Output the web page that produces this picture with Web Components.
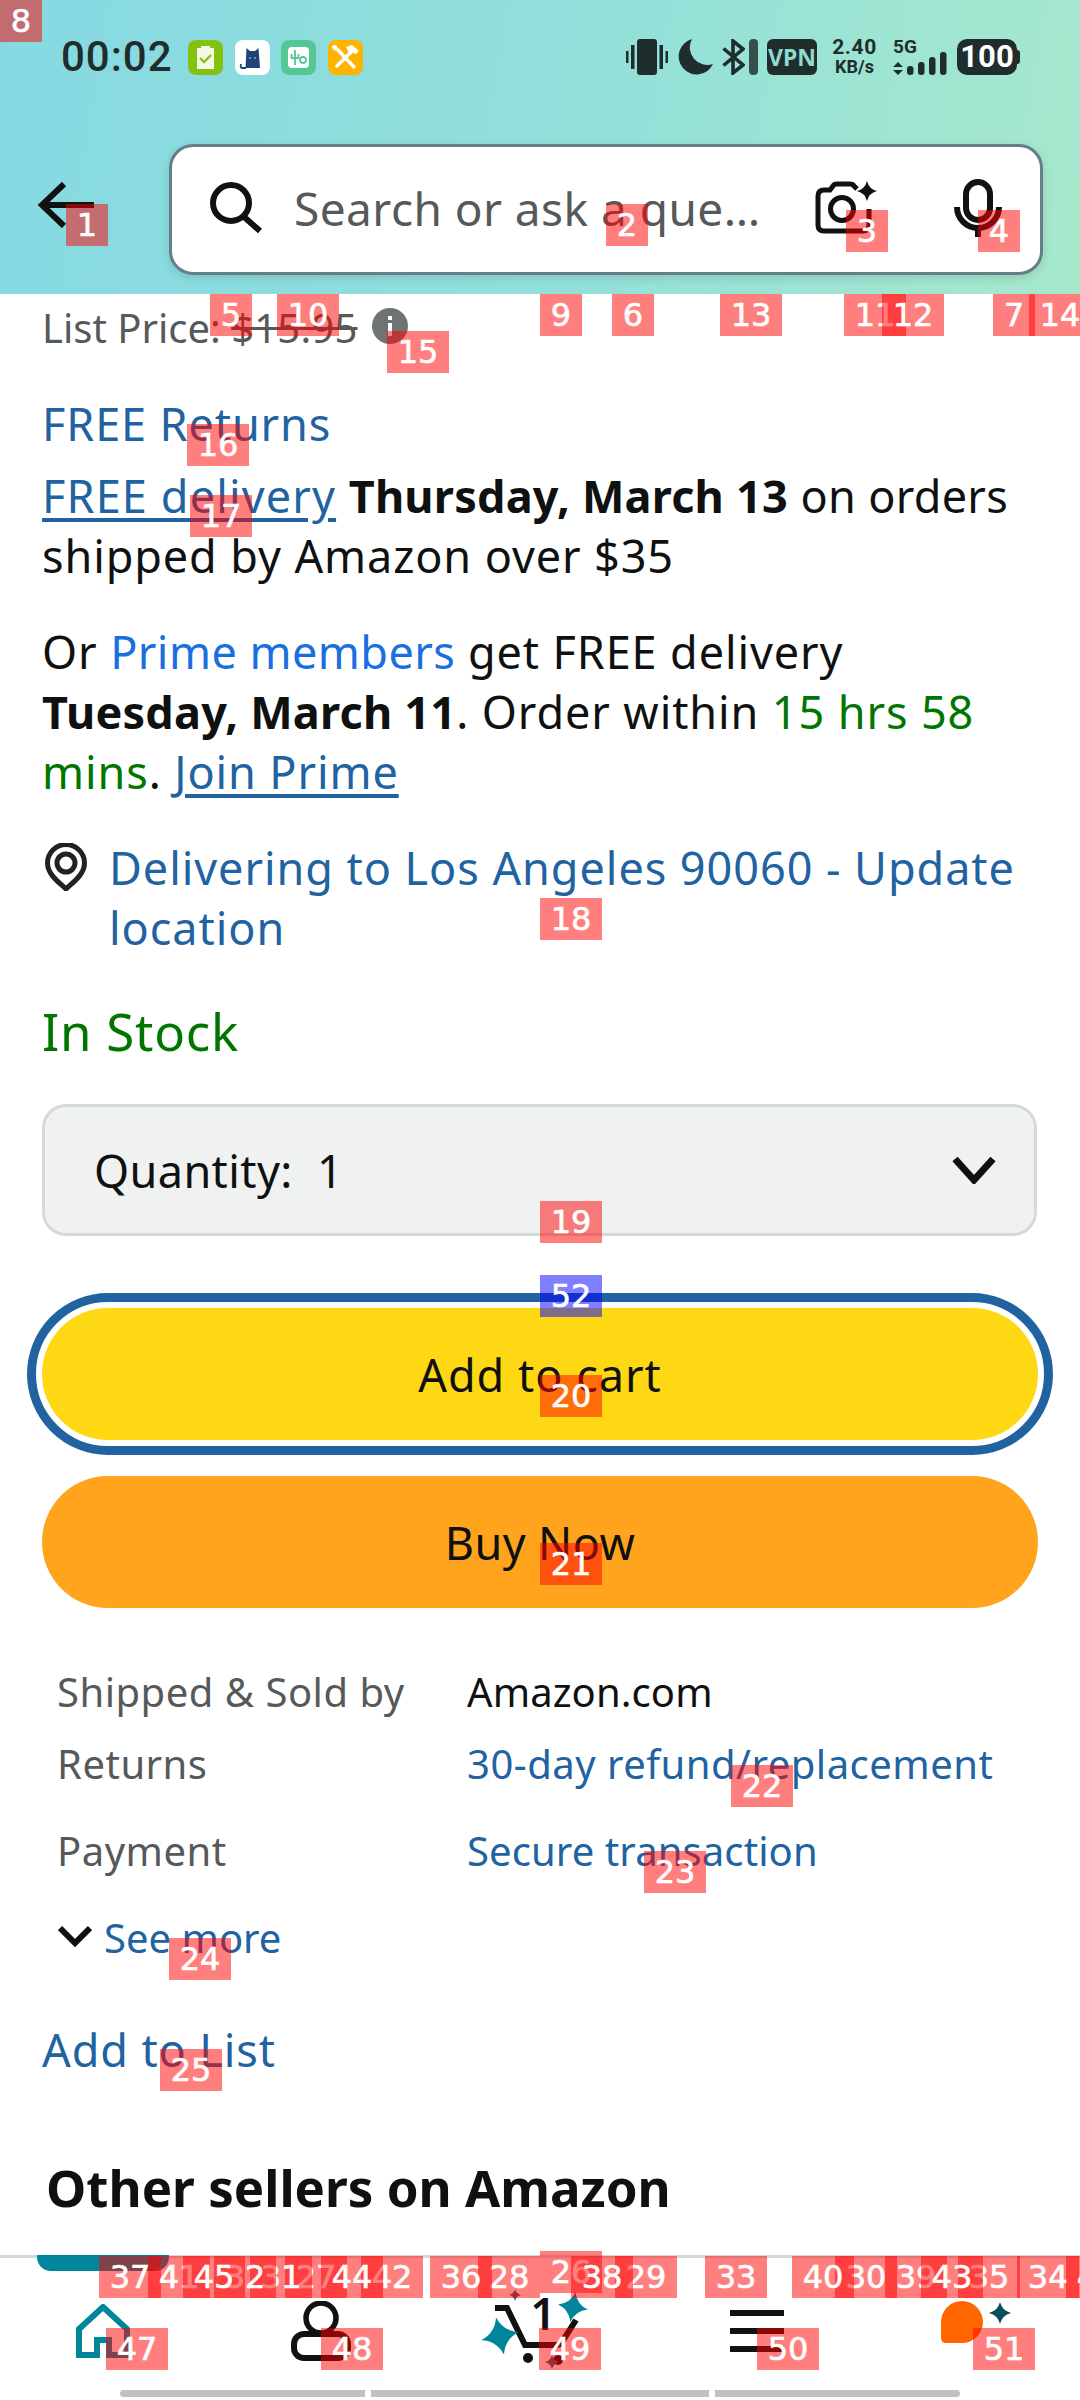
<!DOCTYPE html>
<html>
<head>
<meta charset="utf-8">
<title>Amazon product</title>
<style>
  html, body { margin: 0; padding: 0; background: #fff; }
  body { width: 1080px; height: 2400px; overflow: hidden; position: relative; font-family: "Noto Sans", "Liberation Sans", sans-serif; color: #0f1111; display: flex; flex-direction: column; }
  b { letter-spacing: .22px; }
</style>
</head>
<body>
<top-header></top-header>
<page-content>
  <list-price style="--gap:6px">$15.95</list-price>
  <text-block style="--gap:38px"><blue-link>FREE Returns</blue-link></text-block>
  <text-block style="--gap:12px"><blue-link underline style="letter-spacing:1.15px">FREE delivery</blue-link> <b>Thursday, March 13</b> <span style="letter-spacing:.3px">on orders</span> shipped by Amazon over $35</text-block>
  <text-block style="--gap:36px">Or <blue-link bright style="letter-spacing:.45px">Prime members</blue-link> get FREE delivery <b>Tuesday, March 11</b>. Order within <green-text>15 hrs 58 mins</green-text>. <blue-link underline>Join Prime</blue-link></text-block>
  <location-line style="--gap:36px">Delivering to Los Angeles 90060 - Update location</location-line>
  <stock-line style="--gap:39px">In Stock</stock-line>
  <quantity-select style="--gap:39px">Quantity:&nbsp; 1</quantity-select>
  <buy-button focused style="--gap:57px">Add to cart</buy-button>
  <buy-button orange style="--gap:21px">Buy Now</buy-button>
  <info-row style="--gap:56px" label="Shipped &amp; Sold by">Amazon.com</info-row>
  <info-row style="--gap:16px" label="Returns"><blue-link style="letter-spacing:.5px">30-day refund/replacement</blue-link></info-row>
  <info-row style="--gap:31px" label="Payment"><blue-link>Secure transaction</blue-link></info-row>
  <see-more style="--gap:31px">See more</see-more>
  <text-block style="--gap:54px"><blue-link>Add to List</blue-link></text-block>
  <section-title style="--gap:73px">Other sellers on Amazon</section-title>
</page-content>
<bottom-nav></bottom-nav>
<mark-layer></mark-layer>

<script>
// four point sparkle, used in the camera icon and the nav bar
function star(cx, cy, r, k) {
  k = k || 0.18;
  const c = r * k;
  return `M${cx} ${cy - r}Q${cx + c} ${cy - c} ${cx + r} ${cy}Q${cx + c} ${cy + c} ${cx} ${cy + r}Q${cx - c} ${cy + c} ${cx - r} ${cy}Q${cx - c} ${cy - c} ${cx} ${cy - r}Z`;
}

class Base extends HTMLElement {
  constructor() {
    super();
    this.attachShadow({ mode: 'open' });
    this.shadowRoot.innerHTML = this.render();
  }
  render() { return ''; }
}

class TopHeader extends Base {
  render() {
    return `<style>
      :host { display: block; height: 294px; flex: none; background: linear-gradient(100deg, #85d9e2 0%, #93e0da 55%, #a7e8cc 100%); }
      .status { display: flex; align-items: center; height: 36px; padding: 39px 60px 0 61px; color: #1f2d2d; }
      .time { font: 500 42px/36px Roboto, sans-serif; width: 127px; flex: none; letter-spacing: 1px; }
      .apps { display: flex; gap: 11.5px; }
      .apps svg { width: 35px; height: 35px; display: block; }
      .right { margin-left: auto; display: flex; align-items: center; height: 36px; }
      .right svg { display: block; flex: none; }
      .vpn { background: #1f2d2d; color: #8fdccf; width: 50px; height: 36px; border-radius: 6px; font: 700 23px/36px "Noto Sans", sans-serif; text-align: center; margin: 0 14px 0 9px; }
      .speed { width: 47px; text-align: center; font-family: Roboto, sans-serif; font-weight: 700; margin-right: 15px; white-space: nowrap; }
      .speed div:first-child { font-size: 21px; line-height: 19px; letter-spacing: .6px; }
      .speed div:last-child { font-size: 18px; line-height: 19px; }
      .net { position: relative; width: 54px; height: 36px; margin-right: 10px; }
      .g5 { position: absolute; left: 0; top: 0; font: 700 19px/16px Roboto, sans-serif; }
      .battery { position: relative; width: 60px; height: 36px; background: #1f2d2d; border-radius: 10px; color: #fff; font: 700 31px/36px Roboto, sans-serif; text-align: center; margin-right: 3px; }
      .battery::after { content: ""; position: absolute; left: 60px; top: 11px; width: 3px; height: 14px; background: #1f2d2d; border-radius: 0 3px 3px 0; }
      .search-row { display: flex; align-items: center; margin-top: 69px; padding-left: 37px; }
      .back { width: 58px; height: 46px; margin-top: -10px; flex: none; }
      .box { width: 868px; height: 125px; margin-left: 74px; flex: none; display: flex; align-items: center; background: #fff; border: 3px solid #667f86; border-radius: 24px; box-shadow: 0 3px 10px rgba(0,0,0,.12); }
      .mag { margin: 0 0 0 38px; width: 52px; height: 51px; flex: none; margin-top: -4px; }
      .ph { font-size: 46px; color: #565959; margin-left: 32px; width: 521px; flex: none; white-space: nowrap; letter-spacing: .45px; margin-top: -3px; }
      .cam { width: 62px; height: 53px; flex: none; margin-top: -4px; }
      .mic { width: 48px; height: 58px; flex: none; margin-left: 77px; margin-top: -4px; }
    </style>
    <div class="status">
      <div class="time">00:02</div>
      <div class="apps">
        <svg viewBox="0 0 35 35"><rect width="35" height="35" rx="8" fill="#85c210"/><rect x="9" y="8" width="17" height="21" fill="#f3f9e6"/><rect x="13" y="6" width="9" height="4" fill="#f3f9e6"/><path d="M12 18l4 4 7-7" fill="none" stroke="#85c210" stroke-width="2.4"/></svg>
        <svg viewBox="0 0 35 35"><rect width="35" height="35" rx="8" fill="#fff"/><path d="M10.500 28L11.500 8L15 11H20L23.500 8L25 28Z" fill="#1f4378"/><path d="M11 28H7Q5 28 6 24" fill="none" stroke="#1f4378" stroke-width="1.800"/><circle cx="15" cy="18" r="1" fill="#8aa"/><circle cx="20" cy="18" r="1" fill="#8aa"/></svg>
        <svg viewBox="0 0 35 35"><rect width="35" height="35" rx="8" fill="#55c795"/><rect x="7" y="7" width="21" height="21" rx="4" fill="#fff"/><path d="M14 10v15M10.500 14v4h7v-4" fill="none" stroke="#55c795" stroke-width="1.800"/><circle cx="22" cy="20" r="3" fill="none" stroke="#55c795" stroke-width="1.800"/></svg>
        <svg viewBox="0 0 35 35"><rect width="35" height="35" rx="8" fill="#ffb200"/><path d="M10 10L26 27M24 11L9 26" stroke="#fff" stroke-width="3.500" stroke-linecap="round"/><path d="M18 7l6-2 7 6-3 3-4-2-3 1z" fill="#fff"/><path d="M4 8l3 3 3-3-2-3q-5 0-4 3z" fill="#fff"/></svg>
      </div>
      <div class="right">
        <svg width="42" height="36" viewBox="0 0 42 36" fill="#1f2d2d"><rect x="0" y="12" width="2.500" height="12"/><rect x="5" y="6" width="3.500" height="24"/><rect x="11" y="0" width="20" height="36" rx="3"/><rect x="33.500" y="6" width="3.500" height="24"/><rect x="39.500" y="12" width="2.500" height="12"/></svg>
        <svg width="36" height="36" viewBox="0 0 36 36" style="margin-left:9px"><path d="M15 0A18 18 0 1 0 36 25A17.500 17.500 0 0 1 15 0Z" fill="#1f2d2d"/></svg>
        <svg width="23" height="36" viewBox="0 0 23 36" style="margin-left:9px"><path d="M1.500 9.500L21 26L11 34V2L21 10L1.500 26.500" fill="none" stroke="#1f2d2d" stroke-width="3.600"/></svg>
        <svg width="9" height="36" viewBox="0 0 9 36" style="margin-left:4px"><rect width="9" height="36" rx="4" fill="#34504b"/></svg>
        <div class="vpn">VPN</div>
        <div class="speed"><div>2.40</div><div>KB/s</div></div>
        <div class="net">
          <div class="g5">5G</div>
          <svg width="54" height="36" viewBox="0 0 54 36" fill="#1f2d2d"><path d="M5 23l5 5H0zM5 36l-5-5h10z"/><rect x="14" y="27" width="6.500" height="9" rx="3"/><rect x="25" y="23" width="6.500" height="13" rx="3"/><rect x="36" y="18" width="6.500" height="18" rx="3"/><rect x="47" y="13" width="6.500" height="23" rx="3"/></svg>
        </div>
        <div class="battery">100</div>
      </div>
    </div>
    <div class="search-row">
      <svg class="back" viewBox="0 0 58 46"><path d="M27 2L5 23L27 44M5 23H57" fill="none" stroke="#111" stroke-width="6"/></svg>
      <div class="box">
        <svg class="mag" viewBox="0 0 52 51"><circle cx="21" cy="21" r="18" fill="none" stroke="#111" stroke-width="6"/><path d="M33 34L50 49" stroke="#111" stroke-width="6"/></svg>
        <div class="ph">Search or ask a que…</div>
        <svg class="cam" viewBox="0 0 62 53"><path d="M42 8L39 5Q38 3 35 3H22Q19 3 18 5L15 9H9Q3 9 3 15V44Q3 50 9 50H48Q54 50 54 44V28" fill="none" stroke="#111" stroke-width="5"/><circle cx="27" cy="28" r="11.500" fill="none" stroke="#111" stroke-width="5"/><path d="${star(52, 10, 10, .2)}" fill="#111"/></svg>
        <svg class="mic" viewBox="0 0 48 58"><rect x="12" y="3" width="24" height="38" rx="12" fill="none" stroke="#111" stroke-width="6"/><path d="M3 28A21 21 0 0 0 45 28M24 49V58" fill="none" stroke="#111" stroke-width="6"/></svg>
      </div>
    </div>`;
  }
}

class PageContent extends Base {
  render() {
    return `<style>:host { display: block; flex: 1; min-height: 0; overflow: hidden; }</style><slot></slot>`;
  }
}

class ListPrice extends Base {
  render() {
    return `<style>
      :host { display: flex; align-items: center; margin-top: var(--gap, 0); padding: 0 42px; font-size: 40px; line-height: 56px; color: #565959; white-space: pre; }
      s { text-decoration-thickness: 3px; letter-spacing: .2px; }
      svg { width: 36px; height: 36px; margin-left: 14px; margin-top: -4px; }
    </style><span>List Price: </span><s><slot></slot></s>
    <svg viewBox="0 0 36 36"><circle cx="18" cy="18" r="18" fill="#6f7374"/><rect x="16" y="8" width="4" height="4" fill="#fff"/><rect x="16" y="15" width="4" height="13" fill="#fff"/></svg>`;
  }
}

class TextBlock extends Base {
  render() {
    return `<style>:host { display: block; margin-top: var(--gap, 0); padding: 0 42px; font-size: 45px; line-height: 60px; letter-spacing: .9px; }</style><slot></slot>`;
  }
}

class BlueLink extends Base {
  render() {
    return `<style>
      :host { color: #2162a1; }
      :host([bright]) { color: #1a6fe0; }
      :host([underline]) { text-decoration: underline; text-decoration-thickness: 4px; text-underline-offset: 5px; }
    </style><slot></slot>`;
  }
}

class GreenText extends Base {
  render() { return `<style>:host { color: #007600; }</style><slot></slot>`; }
}

class LocationLine extends Base {
  render() {
    return `<style>
      :host { display: flex; margin-top: var(--gap, 0); padding: 0 42px; font-size: 45px; line-height: 60px; letter-spacing: .95px; color: #2162a1; }
      svg { width: 42px; height: 48px; margin: 5px 22px 0 3px; flex: none; }
    </style><svg viewBox="0 0 42 48"><path d="M21 46C15 40 2.500 32 2.500 20A18.500 18.500 0 0 1 39.500 20C39.500 32 27 40 21 46Z" fill="none" stroke="#222" stroke-width="5"/><circle cx="21" cy="20" r="9" fill="none" stroke="#222" stroke-width="5"/></svg><div><slot></slot></div>`;
  }
}

class StockLine extends Base {
  render() {
    return `<style>:host { display: block; margin-top: var(--gap, 0); padding: 0 42px; font-size: 51px; line-height: 68px; letter-spacing: .75px; color: #007600; }</style><slot></slot>`;
  }
}

class QuantitySelect extends Base {
  render() {
    return `<style>
      :host { display: flex; align-items: center; justify-content: space-between; box-sizing: border-box; height: 132px; margin: var(--gap, 0) 43px 0 42px; padding: 0 38px 0 49px; background: #f0f2f2; border: 3px solid #d5d9d9; border-radius: 24px; font-size: 45px; letter-spacing: .4px; }
      svg { width: 44px; height: 28px; }
    </style><span><slot></slot></span><svg viewBox="0 0 44 28"><path d="M3 3L22 24L41 3" fill="none" stroke="#0f1111" stroke-width="7"/></svg>`;
  }
}

class BuyButton extends Base {
  render() {
    return `<style>
      :host { display: block; box-sizing: border-box; margin: var(--gap, 0) 42px 0; letter-spacing: .4px; }
      .btn { height: 132px; border-radius: 66px; background: #ffa41c; display: flex; align-items: center; justify-content: center; font-size: 45px; }
      :host([focused]) { margin-left: 27px; margin-right: 27px; padding: 6px; border: 9px solid #2162a1; border-radius: 81px; letter-spacing: 1px; }
      :host([focused]) .btn { background: #ffd814; }
    </style><div class="btn"><slot></slot></div>`;
  }
}

class InfoRow extends Base {
  render() {
    return `<style>
      :host { display: grid; grid-template-columns: 410px 1fr; margin-top: var(--gap, 0); padding-left: 57px; font-size: 40px; line-height: 56px; letter-spacing: .1px; }
      .label { color: #565959; letter-spacing: .5px; }
    </style><div class="label">${this.getAttribute('label').replace(/&/g, '&amp;')}</div><div><slot></slot></div>`;
  }
}

class SeeMore extends Base {
  render() {
    return `<style>
      :host { display: flex; align-items: center; margin-top: var(--gap, 0); padding-left: 58px; font-size: 40px; line-height: 56px; color: #2162a1; }
      svg { width: 34px; height: 22px; margin-right: 12px; margin-top: -4px; }
    </style><svg viewBox="0 0 34 22"><path d="M2 3L17 18L32 3" fill="none" stroke="#0f1111" stroke-width="6"/></svg><slot></slot>`;
  }
}

class SectionTitle extends Base {
  render() {
    return `<style>:host { display: block; margin-top: var(--gap, 0); padding-left: 46px; font-size: 51px; font-weight: 700; line-height: 68px; white-space: nowrap; }</style><slot></slot>`;
  }
}

class BottomNav extends Base {
  render() {
    return `<style>
      :host { display: block; position: relative; flex: none; height: 145px; box-sizing: border-box; background: #fff; border-top: 3px solid #d0dadc; }
      .tab { position: absolute; left: 37px; top: -3px; width: 132px; height: 16px; background: #00859b; border-radius: 0 0 14px 14px; }
      .cells { display: grid; grid-template-columns: repeat(5, 216px); height: 132px; align-items: center; justify-items: center; }
      svg { display: block; }
      .bars { display: flex; gap: 6px; padding-left: 120px; }
      .bars i { display: block; height: 7px; background: #c0c0c0; }
      .bars i:first-child { width: 245px; border-radius: 4px 0 0 4px; }
      .bars i:nth-child(2) { width: 338px; }
      .bars i:last-child { width: 245px; border-radius: 0 4px 4px 0; }
    </style>
    <div class="tab"></div>
    <div class="cells">
      <svg width="54" height="54" viewBox="0 0 54 54" style="margin:14px 10px 0 0"><path d="M3 51V25L27 3L51 25V51H33V36H21V51Z" fill="none" stroke="#00859b" stroke-width="6"/></svg>
      <svg width="60" height="60" viewBox="0 0 60 60" style="margin:14px 6px 0 0"><circle cx="30" cy="17" r="15" fill="none" stroke="#111" stroke-width="5.500"/><rect x="3" y="33" width="54" height="24" rx="10" fill="#fff" stroke="#111" stroke-width="6"/></svg>
      <svg width="120" height="84" viewBox="0 0 120 84" style="margin:16px 0 0 0">
        <path d="${star(35, 5, 6, .2)}" fill="#3c5c6a"/>
        <path d="M15 18H27L45 55H76Q80 55 82 52L96 30" fill="none" stroke="#111" stroke-width="6"/>
        <circle cx="48" cy="68" r="5" fill="#111"/><circle cx="78" cy="70" r="5" fill="#111"/>
        <path d="${star(20, 46, 19, .22)}" fill="#00859b" transform="rotate(-12 20 46)"/>
        <path d="${star(93, 17, 15, .22)}" fill="#00859b" transform="rotate(10 93 17)"/>
        <path d="${star(72, 72, 7, .2)}" fill="#3c5c6a"/>
        <text x="63" y="40" text-anchor="middle" font-family="Noto Sans, sans-serif" font-size="45" font-weight="600" fill="#111">1</text>
      </svg>
      <svg width="54" height="42" viewBox="0 0 54 42" fill="#111" style="margin:14px 0 0 2px"><rect width="54" height="6"/><rect y="18" width="54" height="6"/><rect y="36" width="54" height="6"/></svg>
      <svg width="70" height="46" viewBox="0 0 70 46" style="margin:-2px 0 0 8px"><path d="M21 1A21 21 0 0 1 21 43H5Q0 43 0 38V22A21 21 0 0 1 21 1Z" fill="#ff6600"/><path d="${star(59, 13, 11, .2)}" fill="#0b4e5e"/></svg>
    </div>
    <div class="bars"><i></i><i></i><i></i></div>`;
  }
}

// the numbered boxes drawn over the screenshot. [number, x, y]
const MARKS = [
  [8, 0, 0], [1, 66, 204], [2, 606, 204], [3, 846, 210], [4, 978, 210],
  [5, 210, 294], [10, 277, 294], [9, 540, 294], [6, 612, 294], [13, 720, 294], [11, 844, 294], [12, 882, 294], [7, 993, 294], [14, 1029, 294],
  [15, 387, 331], [16, 187, 424], [17, 190, 495], [18, 540, 898], [19, 540, 1201], [52, 540, 1275], [20, 540, 1375], [21, 540, 1543],
  [22, 731, 1765], [23, 644, 1851], [24, 169, 1938], [25, 160, 2049],
  [37, 99, 2256], [41, 148, 2256], [45, 183, 2256], [32, 214, 2256], [31, 250, 2256], [27, 285, 2256], [44, 321, 2256], [42, 361, 2256],
  [36, 430, 2256], [28, 478, 2256], [26, 540, 2251], [38, 571, 2256], [29, 615, 2256], [33, 705, 2256],
  [40, 792, 2256], [30, 835, 2256], [39, 885, 2256], [43, 921, 2256], [35, 958, 2256], [34, 1017, 2256], [46, 1066, 2256],
  [47, 106, 2328], [48, 321, 2328], [49, 539, 2328], [50, 757, 2328], [51, 973, 2328]
];

class MarkLayer extends Base {
  render() {
    const items = MARKS.slice().sort((a, b) => a[0] - b[0]).map(m =>
      `<span class="${m[0] === 52 ? 'blue' : ''} ${m[0] < 10 ? 'one' : ''}" style="left:${m[1]}px;top:${m[2]}px">${m[0]}</span>`).join('');
    return `<style>
      :host { position: absolute; inset: 0; overflow: hidden; pointer-events: none; }
      span { position: absolute; width: 62px; height: 42px; background: rgba(255,0,0,.5); color: #fff; font: 32px/42px "DejaVu Sans", sans-serif; text-align: center; -webkit-text-stroke: .6px #fff; }
      .one { width: 42px; }
      .blue { background: rgba(0,0,255,.5); }
    </style>${items}`;
  }
}

customElements.define('top-header', TopHeader);
customElements.define('page-content', PageContent);
customElements.define('list-price', ListPrice);
customElements.define('text-block', TextBlock);
customElements.define('blue-link', BlueLink);
customElements.define('green-text', GreenText);
customElements.define('location-line', LocationLine);
customElements.define('stock-line', StockLine);
customElements.define('quantity-select', QuantitySelect);
customElements.define('buy-button', BuyButton);
customElements.define('info-row', InfoRow);
customElements.define('see-more', SeeMore);
customElements.define('section-title', SectionTitle);
customElements.define('bottom-nav', BottomNav);
customElements.define('mark-layer', MarkLayer);
</script>
</body>
</html>
